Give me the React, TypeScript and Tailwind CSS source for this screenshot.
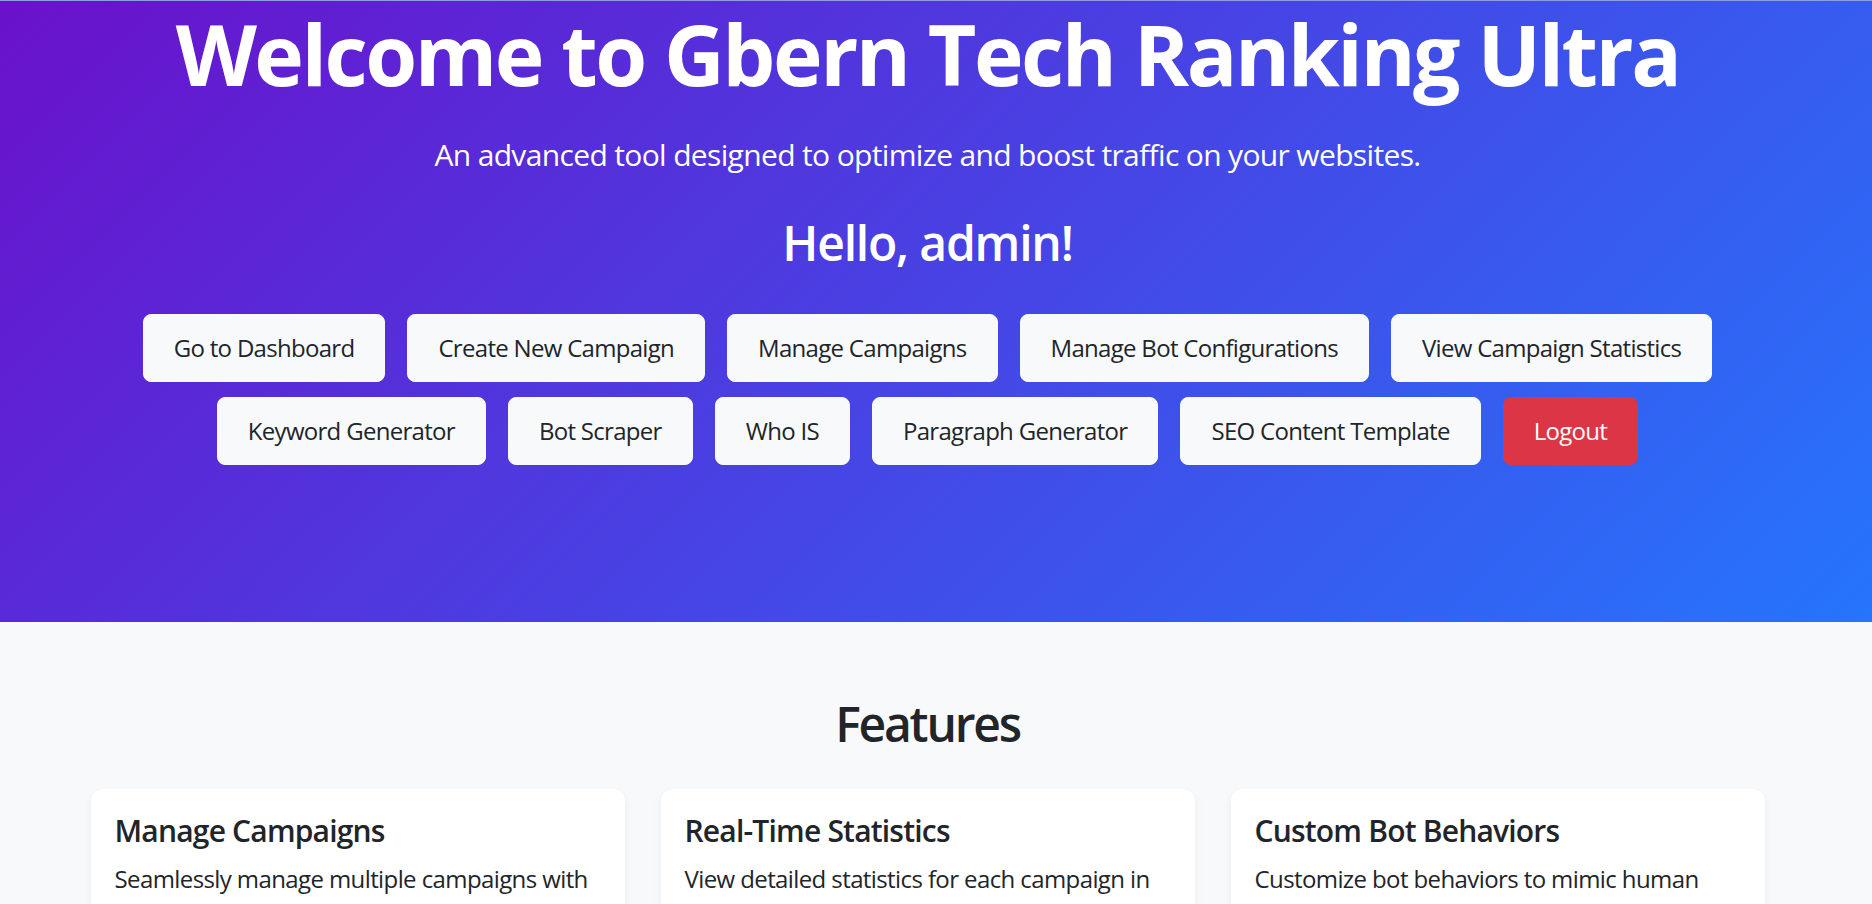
import React from "react";

const row1 = [
  "Go to Dashboard",
  "Create New Campaign",
  "Manage Campaigns",
  "Manage Bot Configurations",
  "View Campaign Statistics",
];
const row2 = [
  "Keyword Generator",
  "Bot Scraper",
  "Who IS",
  "Paragraph Generator",
  "SEO Content Template",
];

const cards = [
  {
    title: "Manage Campaigns",
    text: "Seamlessly manage multiple campaigns with ease, tracking every detail from a single place.",
  },
  {
    title: "Real-Time Statistics",
    text: "View detailed statistics for each campaign in real time to measure performance and results.",
  },
  {
    title: "Custom Bot Behaviors",
    text: "Customize bot behaviors to mimic human browsing patterns for natural traffic.",
  },
];

function Btn({ label, danger }: { label: string; danger?: boolean }) {
  return (
    <button
      className={
        danger
          ? "rounded-[8px] border border-[#dc3545] bg-[#dc3545] px-[30px] py-[15px] text-[24px] leading-[36px] tracking-[-0.7px] text-white"
          : "rounded-[8px] border border-[#f8f9fa] bg-[#f8f9fa] px-[30px] py-[15px] text-[24px] leading-[36px] tracking-[-0.7px] text-[#212529]"
      }
    >
      {label}
    </button>
  );
}

export default function App() {
  return (
    <div
      className="min-h-screen bg-[#f8f9fa] text-[#212529]"
      style={{ fontFamily: '"Segoe UI", "Open Sans", "Noto Sans", sans-serif' }}
    >
      <section className="h-[622px] border-t border-[#8f9be6] bg-[linear-gradient(135deg,#6a11cb_0%,#2575fc_100%)] text-white">
        <div className="mr-[17px] flex flex-col items-center">
          <h1 className="mt-[3px] text-[84px] font-bold leading-[100px] tracking-[-2.5px]">
            Welcome to Gbern Tech Ranking Ultra
          </h1>
          <p className="mt-[28px] text-[30px] font-normal leading-[45px] tracking-[-0.65px]">
            An advanced tool designed to optimize and boost traffic on your websites.
          </p>
          <h2 className="mt-[37px] text-[48px] font-semibold leading-[58px] tracking-[-1.2px]">Hello, admin!</h2>
          <div className="mt-[42px] flex flex-col items-center gap-y-[15px]">
            <div className="flex justify-center gap-x-[22px]">
              {row1.map((l) => (
                <Btn key={l} label={l} />
              ))}
            </div>
            <div className="flex justify-center gap-x-[22px]">
              {row2.map((l) => (
                <Btn key={l} label={l} />
              ))}
              <Btn label="Logout" danger />
            </div>
          </div>
        </div>
      </section>
      <section className="bg-[#f8f9fa]">
        <div className="mr-[17px] flex flex-col items-center">
          <h2 className="mt-[73px] text-[48px] font-semibold leading-[58px] tracking-[-2.2px] text-[#212529]">
            Features
          </h2>
          <div className="mt-[36px] grid w-[1674px] grid-cols-3 gap-x-[36px]">
            {cards.map((c) => (
              <div
                key={c.title}
                className="rounded-[12px] bg-white p-[24px] shadow-[0_4px_10px_rgba(0,0,0,0.06)]"
              >
                <h5 className="text-[30px] font-semibold leading-[36px] tracking-[-0.8px] text-[#212529]">
                  {c.title}
                </h5>
                <p className="mt-[12px] text-[24px] leading-[36px] tracking-[-0.6px] text-[#212529]">{c.text}</p>
              </div>
            ))}
          </div>
        </div>
      </section>
    </div>
  );
}
